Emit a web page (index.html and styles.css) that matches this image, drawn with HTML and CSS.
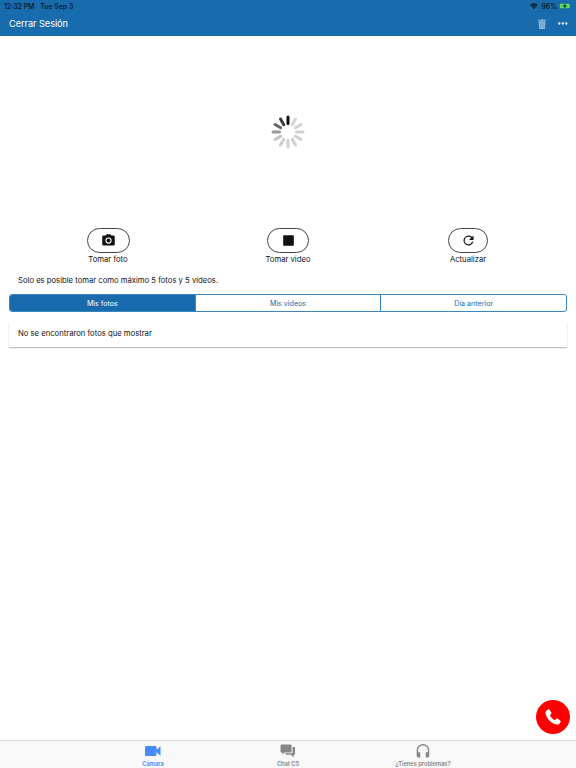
FILE: index.html
```html
<!DOCTYPE html>
<html lang="es">
<head>
    <meta charset="UTF-8">
    <meta name="viewport" content="width=device-width, initial-scale=1.0">
    <title>Cámara</title>
    <link rel="stylesheet" href="styles.css">
</head>
<body>
    <header class="header">
      <div class="status-bar">
        <span class="time">12:32 PM</span>
        <span class="date">Tue Sep 3</span>
        <svg class="wifi" viewBox="0 0 16 12"><path d="M0 3.8a11.5 11.5 0 0 1 16 0L14.4 5.500a9.200 9.200 0 0 0-12.800 0zM2.700 6.600a7.600 7.600 0 0 1 10.600 0l-1.700 1.700a5.200 5.200 0 0 0-7.200 0zM5.400 9.300a3.700 3.700 0 0 1 5.200 0L8 12z"/></svg>
        <span class="percent">96%</span>
        <svg class="battery" viewBox="0 0 26 12">
          <rect x=".5" y=".5" width="22" height="11" rx="3" fill="none" stroke="#2b5d7c"/>
          <rect x="1.500" y="1.500" width="20" height="9" rx="2" fill="#53df68"/>
          <path d="M24 4v4c2-.5 2-3.500 0-4z" fill="#2b5d7c"/>
          <path d="M13 1.500 6.500 6.700h4.500L10 10.500l6.500-5.200H12z" fill="#06151f"/>
        </svg>
      </div>
      <div class="toolbar">
        <span class="logout">Cerrar Sesión</span>
        <svg class="trash" viewBox="0 0 8 10"><path d="M0 .8h2.500L3 .2h2l.5.6H8v1H0zM.6 2.200h6.800L6.900 9.400q0 .6-.7.6H1.800q-.7 0-.7-.6z"/><path d="M2.600 3.300l.2 5.500M4 3.300v5.500M5.400 3.300l-.2 5.500" stroke="#4f8fc0" stroke-width=".45"/></svg>
        <svg class="more" viewBox="0 0 10 3"><circle cx="1.300" cy="1.500" r="1.150"/><circle cx="4.800" cy="1.500" r="1.150"/><circle cx="8.300" cy="1.500" r="1.150"/></svg>
      </div>
    </header>

    <main class="content">
      <div class="preview">
        <svg class="spinner" viewBox="-17 -17 34 34">
          <path d="M0-8.500V-15" stroke="#111"/>
          <path d="M0-8.500V-15" stroke="#d3d3d3" transform="rotate(30)"/>
          <path d="M0-8.500V-15" stroke="#d3d3d3" transform="rotate(60)"/>
          <path d="M0-8.500V-15" stroke="#d0d0d0" transform="rotate(90)"/>
          <path d="M0-8.500V-15" stroke="#d0d0d0" transform="rotate(120)"/>
          <path d="M0-8.500V-15" stroke="#d0d0d0" transform="rotate(150)"/>
          <path d="M0-8.500V-15" stroke="#d0d0d0" transform="rotate(180)"/>
          <path d="M0-8.500V-15" stroke="#cecece" transform="rotate(210)"/>
          <path d="M0-8.500V-15" stroke="#c2c2c2" transform="rotate(240)"/>
          <path d="M0-8.500V-15" stroke="#999" transform="rotate(270)"/>
          <path d="M0-8.500V-15" stroke="#636363" transform="rotate(300)"/>
          <path d="M0-8.500V-15" stroke="#393939" transform="rotate(330)"/>
        </svg>
      </div>

      <div class="actions">
        <div class="action">
          <button class="pill photo"><svg viewBox="0 0 24 24"><path d="M9 2 7.200 4H4a2 2 0 0 0-2 2v12a2 2 0 0 0 2 2h16a2 2 0 0 0 2-2V6a2 2 0 0 0-2-2h-3.200L15 2zm3 15a5 5 0 1 1 0-10 5 5 0 0 1 0 10z"/><circle cx="12" cy="12" r="3.200"/></svg></button>
          <span>Tomar foto</span>
        </div>
        <div class="action">
          <button class="pill video"><svg viewBox="0 0 24 24"><rect x="3.500" y="3.500" width="17" height="17" rx="1.500"/></svg></button>
          <span>Tomar video</span>
        </div>
        <div class="action">
          <button class="pill refresh"><svg viewBox="0 0 24 24"><path d="M17.650 6.350A8 8 0 1 0 19.730 14h-2.080A6 6 0 1 1 12 6c1.660 0 3.140.69 4.220 1.780L13 11h7V4z"/></svg></button>
          <span>Actualizar</span>
        </div>
      </div>

      <p class="hint">Solo es posible tomar como máximo 5 fotos y 5 videos.</p>

      <div class="segment">
        <button class="active">Mis fotos</button>
        <button>Mis videos</button>
        <button>Día anterior</button>
      </div>

      <div class="card">No se encontraron fotos que mostrar</div>
    </main>

    <button class="call"><svg viewBox="0 0 16 16"><path d="M3.200.4C2 .8.4 2.300.4 4c.2 2.600 2.300 5.900 4.500 8 2.300 2.200 5 3.600 7.200 3.600 1.600 0 3-1.500 3.500-2.700.2-.6 0-1-.4-1.300l-2.500-1.800c-.6-.4-1.100-.3-1.500.1l-.9.9c-.4.3-.8.3-1.300 0C7.500 9.900 6 8.400 5.200 7c-.3-.5-.2-.8.1-1.200l.9-.9c.4-.4.4-.9.100-1.400L4.600.9C4.300.4 3.800.2 3.200.4z"/></svg></button>

    <nav class="tabs">
      <div class="tab selected">
        <svg viewBox="0 0 16 12"><path d="M1 1h9.500q1 0 1 1v2.700L15.500 1.200v9.600L11.500 7.300V10q0 1-1 1H1q-1 0-1-1V2q0-1 1-1z"/></svg>
        <span>Cámara</span>
      </div>
      <div class="tab">
        <svg viewBox="0.500 0 15 12"><path d="M1.800 0h8.700q.8 0 .8.800V6.500q0 .8-.8.800H4.700L2.700 9.300V7.300h-.9Q1 7.300 1 6.500V.8Q1 0 1.800 0z"/><path d="M12.200 2.200h1.600q.8 0 .8.800v5.800q0 .8-.8.800h-.6V12l-2.400-2.400H6.300q-.8 0-.8-.8v-.7h6q.8 0 .8-.8z"/></svg>
        <span>Chat C5</span>
      </div>
      <div class="tab">
        <svg viewBox="0 0 16 14"><path d="M8 0a6.300 6.300 0 0 0-6.300 6.300v5.500c0 1 .8 1.800 1.800 1.800h1.800V8.200H3.100V6.300a4.900 4.900 0 0 1 9.800 0v1.900h-2.200v5.400h1.800c1 0 1.800-.8 1.800-1.800V6.300A6.300 6.300 0 0 0 8 0z"/></svg>
        <span>¿Tienes problemas?</span>
      </div>
    </nav>
</body>
</html>
```
FILE: styles.css
```css
* {
  box-sizing: border-box;
}

body {
  margin: 0;
  height: 768px;
  display: flex;
  flex-direction: column;
  position: relative;
  overflow: hidden;
  background: #fff;
  color: #111;
  font-family: Inter, "Liberation Sans", sans-serif;
  font-size: 7.68px;
}

button {
  margin: 0;
  padding: 0;
  border: none;
  background: none;
  font-family: inherit;
  color: inherit;
}

svg {
  display: block;
  fill: currentColor;
}

.header {
  height: 36px;
  background: #186cad;
}

.status-bar {
  display: flex;
  align-items: center;
  height: 12px;
  padding: 0 4px;
  font-size: 6.9px;
  font-weight: 500;
  color: #06151f;
}

.date {
  margin-left: 6px;
}

.wifi {
  width: 8px;
  height: 6px;
  margin-left: auto;
}

.percent {
  margin-left: 3px;
}

.battery {
  width: 13px;
  height: 6px;
  margin-left: 2px;
}

.toolbar {
  display: flex;
  align-items: center;
  height: 23.5px;
  padding: 0 8px 0 9px;
  color: #fff;
}

.logout {
  font-size: 9.2px;
  letter-spacing: -0.05px;
}

.trash {
  width: 8px;
  height: 10px;
  margin-left: auto;
  color: #8fb8d8;
}

.more {
  width: 10px;
  height: 3px;
  margin-left: 12px;
}

.content {
  flex: 1;
  padding: 0 9px;
}

.preview {
  display: flex;
  align-items: center;
  justify-content: center;
  height: 191.5px;
}

.spinner {
  width: 34px;
  height: 34px;
  stroke-width: 3;
  stroke-linecap: round;
}

.actions {
  display: flex;
  margin: 0 -9px;
  padding: 0 18px;
}

.action {
  flex: 1;
  display: flex;
  flex-direction: column;
  align-items: center;
  line-height: 14px;
}

.pill {
  display: flex;
  align-items: center;
  justify-content: center;
  width: 42px;
  height: 25.5px;
  border: 1px solid #444;
  border-radius: 13px;
}

.pill.photo {
  width: 43px;
}

.pill.refresh {
  width: 40px;
}

.pill svg {
  width: 15px;
  height: 15px;
}

.hint {
  margin: 7px 0 6px 9px;
  line-height: 14px;
}

.segment {
  display: flex;
  height: 18px;
  border: 1px solid #3c86bf;
  border-radius: 3px;
  overflow: hidden;
}

.segment button {
  flex: 1;
  font-size: 7.1px;
  color: #186cad;
}

.segment button + button {
  border-left: 1px solid #3c86bf;
}

.segment .active {
  background: #186cad;
  color: #fff;
}

.card {
  height: 26px;
  margin-top: 9px;
  padding: 0 9px;
  line-height: 26px;
  border-radius: 1px;
  box-shadow: 0 1px 1.5px rgba(0, 0, 0, 0.3);
}

.call {
  position: absolute;
  right: 6px;
  bottom: 34px;
  display: flex;
  align-items: center;
  justify-content: center;
  width: 34px;
  height: 34px;
  border-radius: 50%;
  background: #f00;
  color: #fff;
}

.call svg {
  width: 16px;
  height: 16px;
}

.tabs {
  display: flex;
  justify-content: center;
  height: 28.5px;
  border-top: 1px solid #dcdcdc;
  background: #f8f8f8;
}

.tab {
  width: 135px;
  display: flex;
  flex-direction: column;
  align-items: center;
  color: #868686;
  font-size: 5.8px;
  font-weight: 600;
  letter-spacing: -0.05px;
}

.tab svg {
  width: 16px;
  height: 14px;
  margin-top: 3px;
}

.tab span {
  line-height: 8px;
  margin-top: 2px;
}

.selected {
  color: #488aff;
}
```
